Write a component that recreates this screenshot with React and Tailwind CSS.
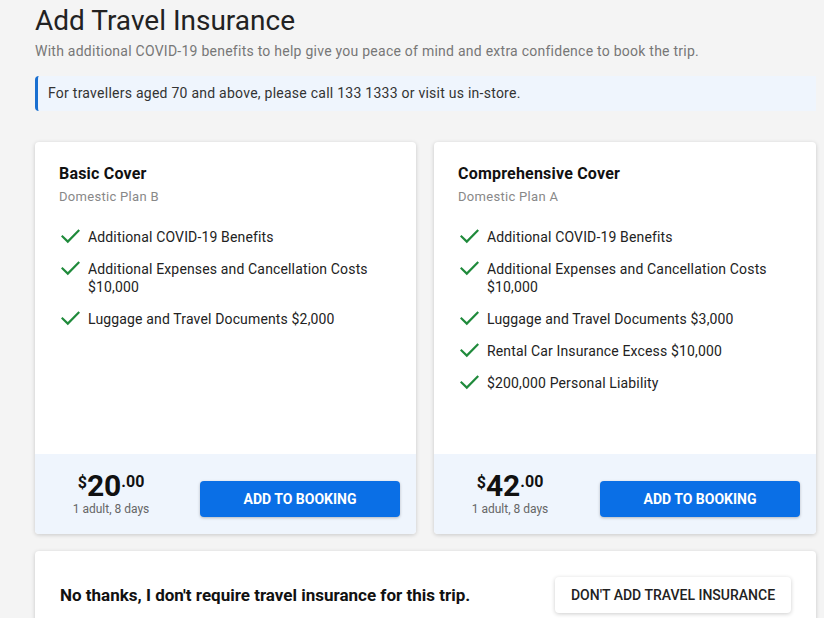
import React from "react";

function Check() {
  return (
    <svg width="19" height="15" viewBox="0 0 19 15" className="shrink-0 mt-[1px]">
      <path d="M1.5 7.5 L6.8 12.6 L17.5 1.8" fill="none" stroke="#1f8a3b" strokeWidth="2.2" strokeLinecap="square" />
    </svg>
  );
}

function Card({ title, plan, items, dollars }) {
  return (
    <div className="h-[392px] flex flex-col bg-white rounded-[4px] shadow-[0_1px_4px_rgba(0,0,0,0.18)] overflow-hidden">
      <div className="px-[24px] pt-[22px] pb-[24px]">
        <div className="text-[16px] leading-[20px] font-bold text-[#111] tracking-[0.2px]">{title}</div>
        <div className="mt-[4px] text-[13px] leading-[18px] text-[#888] tracking-[0.3px]">{plan}</div>
        <ul className="mt-[22px] flex flex-col gap-[14px]">
          {items.map((it, i) => (
            <li key={i} className="flex gap-[8px] pl-[2px] text-[14px] leading-[18px] text-[#222] tracking-[0.15px]">
              <Check />
              <span className="w-[290px]">{it}</span>
            </li>
          ))}
        </ul>
      </div>
      <div className="mt-auto h-[80px] bg-[#eff5fd] flex items-start pl-[30px] pr-[16px]">
        <div className="w-[92px] pt-[17px] flex flex-col items-center">
          <div className="flex items-start text-[#111] font-bold">
            <span className="text-[16px] leading-[16px] mt-[4px]">$</span>
            <span className="text-[30px] leading-[30px]">{dollars}</span>
            <span className="text-[16px] leading-[16px] mt-[3px]">.00</span>
          </div>
          <div className="text-[12px] leading-[14px] text-[#666] mt-[1px]">1 adult, 8 days</div>
        </div>
        <button className="ml-auto mt-[27px] w-[200px] h-[36px] rounded-[4px] bg-[#0a6fe6] text-white text-[14px] font-bold shadow-[0_1px_3px_rgba(0,0,0,0.25)]">
          ADD TO BOOKING
        </button>
      </div>
    </div>
  );
}

export default function App() {
  return (
    <div className="h-[618px] bg-[#f4f4f4] font-['Roboto',sans-serif] overflow-hidden">
      <div className="ml-[35px] w-[781px] pt-[4px]">
        <h1 className="text-[28px] leading-[34px] text-[#222] font-normal">Add Travel Insurance</h1>
        <p className="mt-[4px] text-[14px] leading-[18px] text-[#777] tracking-[0.25px]">
          With additional COVID-19 benefits to help give you peace of mind and extra confidence to book the trip.
        </p>
        <div className="mt-[16px] h-[35px] flex items-center bg-[#eff5fd] border-l-[3px] border-[#1a6fd0] rounded-l-[4px] pl-[10px] text-[14px] text-[#333] tracking-[0.25px]">
          For travellers aged 70 and above, please call 133 1333 or visit us in-store.
        </div>
        <div className="mt-[31px] grid grid-cols-[381px_382px] gap-[18px]">
          <Card
            title="Basic Cover"
            plan="Domestic Plan B"
            dollars="20"
            items={[
              "Additional COVID-19 Benefits",
              "Additional Expenses and Cancellation Costs $10,000",
              "Luggage and Travel Documents $2,000",
            ]}
          />
          <Card
            title="Comprehensive Cover"
            plan="Domestic Plan A"
            dollars="42"
            items={[
              "Additional COVID-19 Benefits",
              "Additional Expenses and Cancellation Costs $10,000",
              "Luggage and Travel Documents $3,000",
              "Rental Car Insurance Excess $10,000",
              "$200,000 Personal Liability",
            ]}
          />
        </div>
        <div className="mt-[17px] h-[100px] bg-white rounded-[4px] shadow-[0_1px_4px_rgba(0,0,0,0.18)] flex items-start pl-[25px] pr-[25px] pt-[26px]">
          <div className="text-[17px] leading-[20px] font-bold text-[#111] mt-[8px]">
            No thanks, I don't require travel insurance for this trip.
          </div>
          <button className="ml-auto w-[236px] h-[36px] rounded-[4px] bg-white text-[14px] font-medium text-[#222] shadow-[0_1px_4px_rgba(0,0,0,0.2)]">
            DON'T ADD TRAVEL INSURANCE
          </button>
        </div>
      </div>
    </div>
  );
}
